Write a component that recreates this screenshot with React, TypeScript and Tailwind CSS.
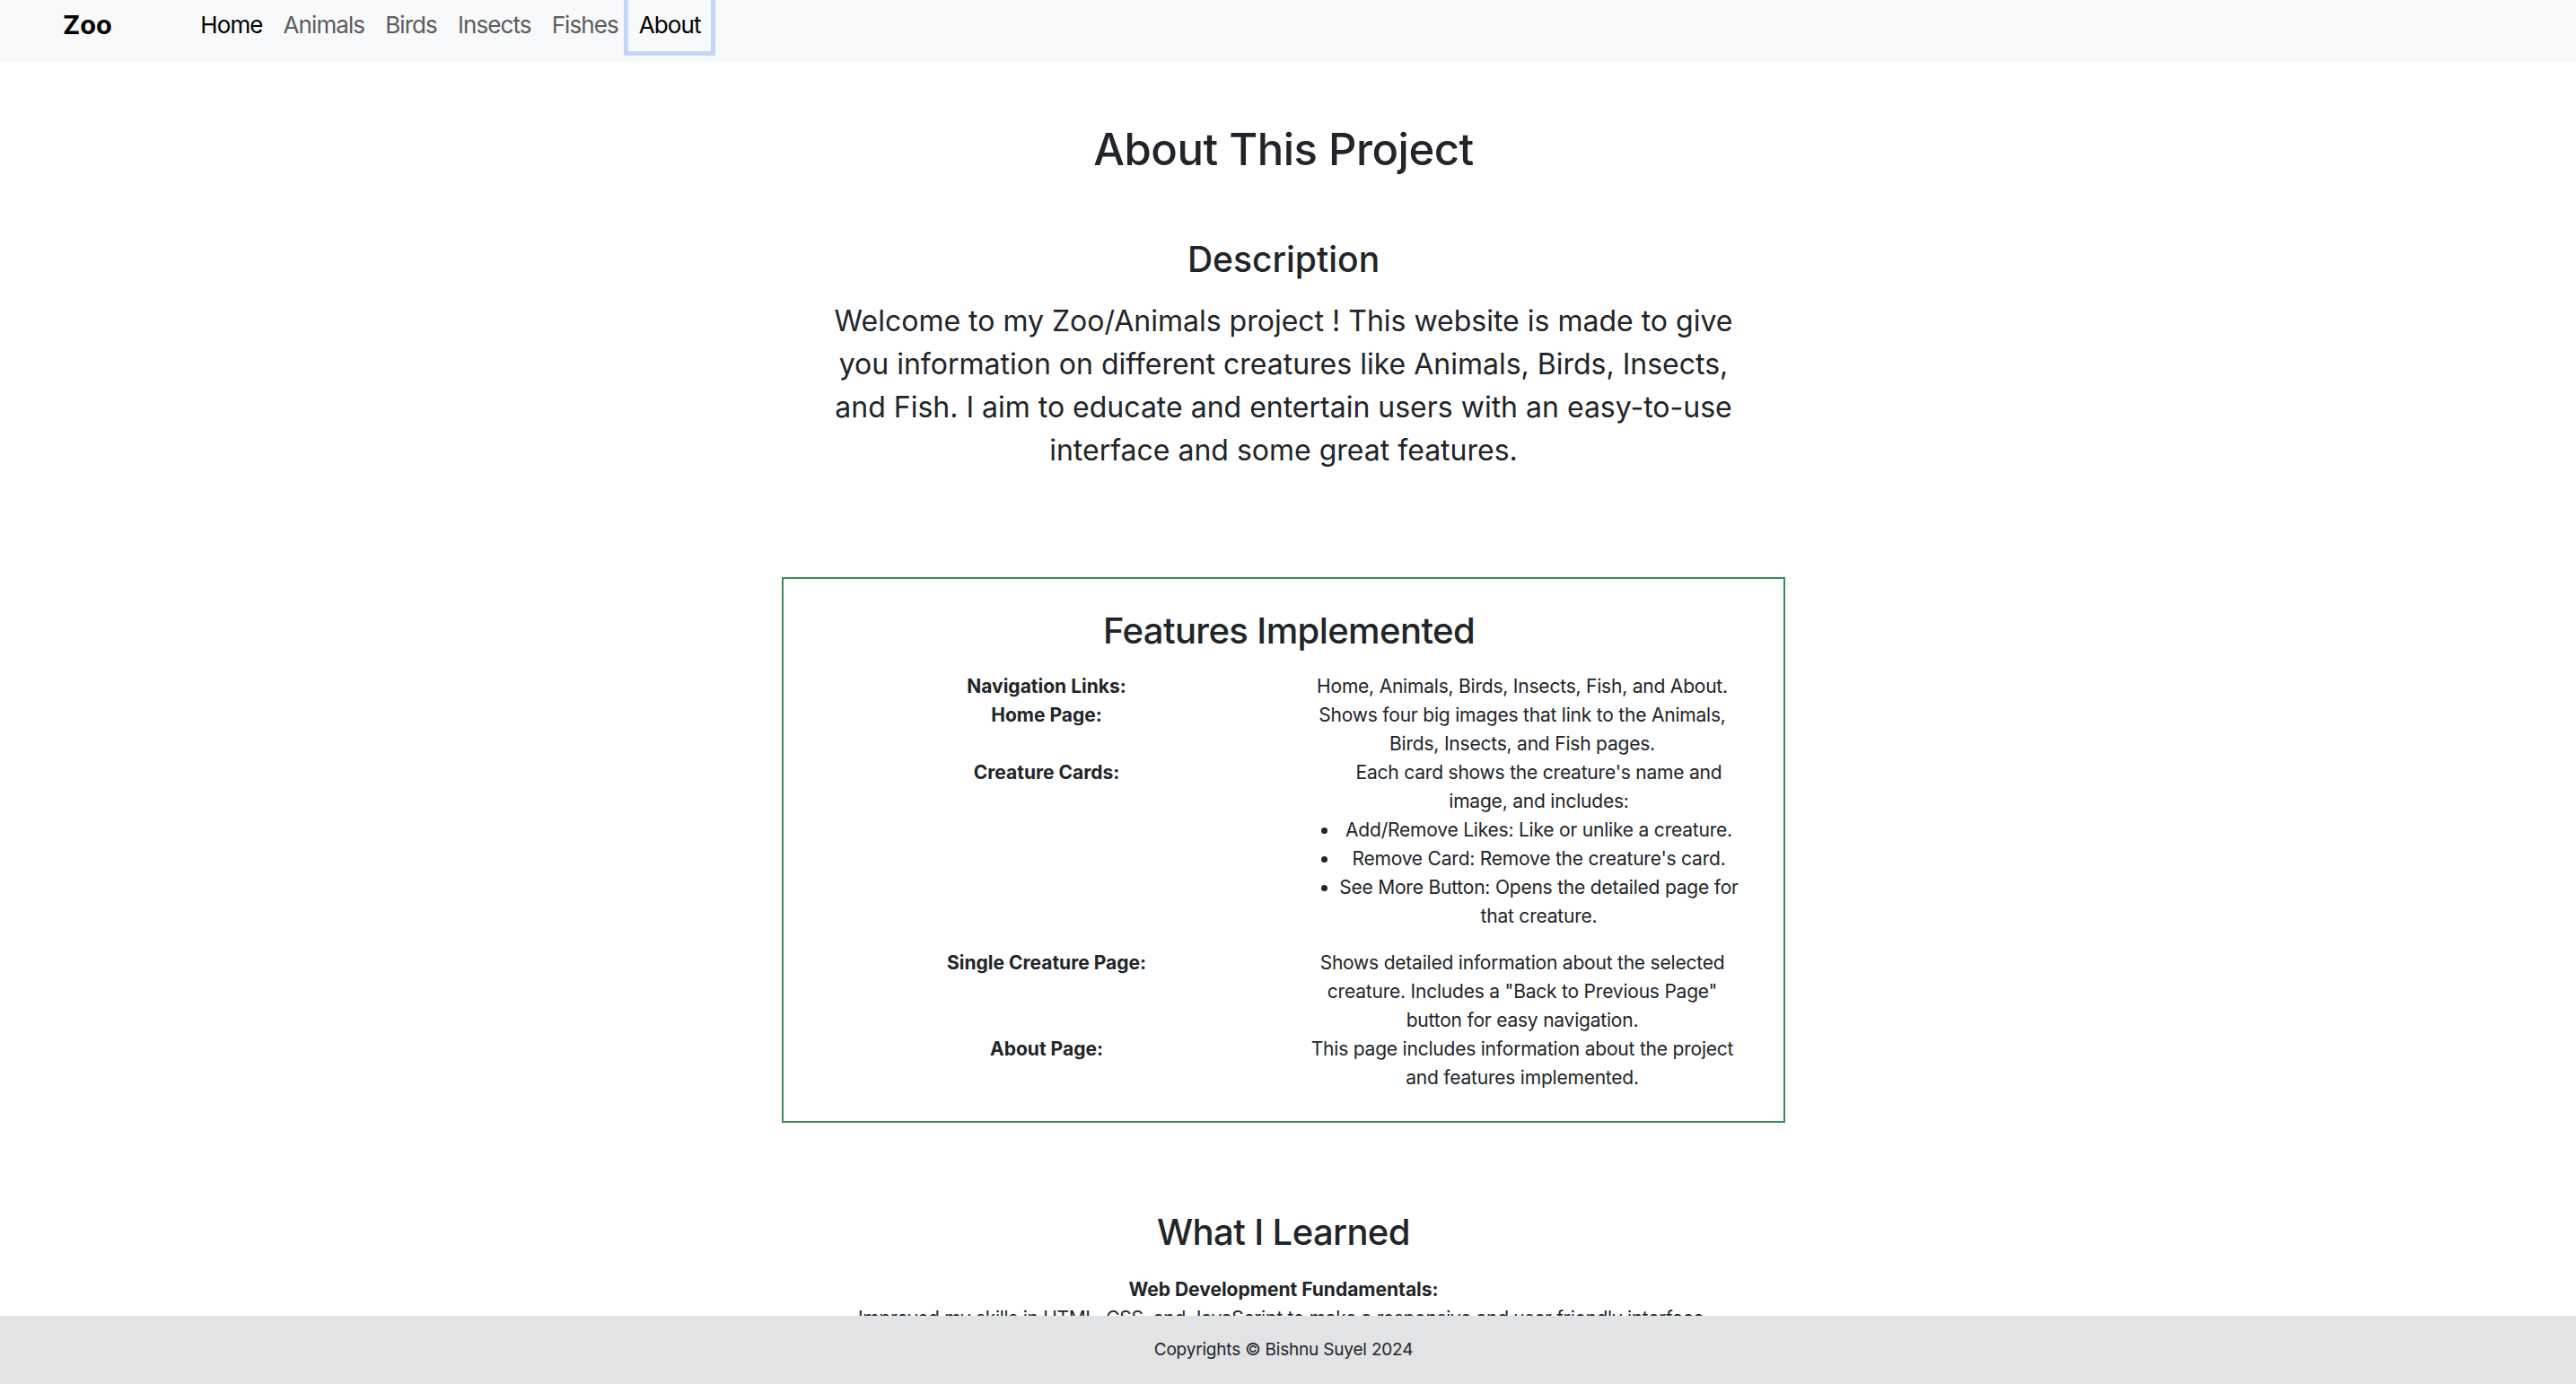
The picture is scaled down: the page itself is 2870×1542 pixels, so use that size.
import React from "react";

const navLinks = [
  { label: "Home", active: true },
  { label: "Animals" },
  { label: "Birds" },
  { label: "Insects" },
  { label: "Fishes" },
  { label: "About", focused: true },
];

type Feature = {
  label: string;
  lines?: string[];
  intro?: string[];
  bullets?: string[][];
};

const features: Feature[] = [
  {
    label: "Navigation Links:",
    lines: ["Home, Animals, Birds, Insects, Fish, and About."],
  },
  {
    label: "Home Page:",
    lines: [
      "Shows four big images that link to the Animals,",
      "Birds, Insects, and Fish pages.",
    ],
  },
  {
    label: "Creature Cards:",
    intro: ["Each card shows the creature's name and", "image, and includes:"],
    bullets: [
      ["Add/Remove Likes: Like or unlike a creature."],
      ["Remove Card: Remove the creature's card."],
      ["See More Button: Opens the detailed page for", "that creature."],
    ],
  },
  {
    label: "Single Creature Page:",
    lines: [
      "Shows detailed information about the selected",
      'creature. Includes a "Back to Previous Page"',
      "button for easy navigation.",
    ],
  },
  {
    label: "About Page:",
    lines: [
      "This page includes information about the project",
      "and features implemented.",
    ],
  },
];

function Lines({ lines }: { lines: string[] }) {
  return (
    <>
      {lines.map((l, i) => (
        <div key={i} className="whitespace-nowrap">
          {l}
        </div>
      ))}
    </>
  );
}

export default function App() {
  return (
    <div className="flex flex-col h-screen overflow-hidden bg-white text-[#212529] font-['Inter',sans-serif]">
      {/* Navbar */}
      <nav className="h-[69px] shrink-0 bg-[#f8f9fa] flex items-start">
        <div className="ml-[70px] pt-[6px] text-[29px] leading-[44px] font-bold text-black">
          Zoo
        </div>
        <ul className="flex ml-[87px]">
          {navLinks.map((link) => (
            <li key={link.label}>
              <a
                href="#"
                className={`block h-[57px] px-[11.5px] pt-[6px] text-[26px] leading-[44px] tracking-[-0.035em] ${
                  link.active || link.focused ? "text-black" : "text-[#5b5c5d]"
                } ${link.focused ? "shadow-[0_0_0_5px_#c4d6f8]" : ""}`}
              >
                {link.label}
              </a>
            </li>
          ))}
        </ul>
      </nav>

      {/* Content */}
      <main className="flex-1 min-h-0 overflow-hidden pr-[10px]">
        <div className="flex flex-col items-center text-center">
          <h1 className="mt-[68px] text-[49px] leading-[60px] font-medium tracking-[-0.01em]">
            About This Project
          </h1>

          <h2 className="mt-[70px] text-[39px] leading-[44px] font-medium">
            Description
          </h2>
          <p className="mt-[23px] text-[32px] leading-[48px]">
            Welcome to my Zoo/Animals project ! This website is made to give
            <br />
            you information on different creatures like Animals, Birds, Insects,
            <br />
            and Fish. I aim to educate and entertain users with an easy-to-use
            <br />
            interface and some great features.
          </p>

          {/* Features box */}
          <section className="mt-[117px] w-[1118px] border-2 border-[#3d8a5b] pt-[33px] pb-[32px] pl-[12px]">
            <h2 className="text-[40px] leading-[50px] font-medium tracking-[-0.015em]">
              Features Implemented
            </h2>
            <div className="mt-[21px] grid grid-cols-[562px_482px] gap-x-[8px] text-[21px] leading-[32px]">
              {features.map((f) => (
                <React.Fragment key={f.label}>
                  <div className="font-bold whitespace-nowrap">{f.label}</div>
                  <div className="tracking-[-0.01em]">
                    {f.lines && <Lines lines={f.lines} />}
                    {f.intro && (
                      <div className="pl-[37px]">
                        <Lines lines={f.intro} />
                      </div>
                    )}
                    {f.bullets && (
                      <ul className="list-disc pl-[37px] mb-[20px]">
                        {f.bullets.map((b, i) => (
                          <li key={i}>
                            <Lines lines={b} />
                          </li>
                        ))}
                      </ul>
                    )}
                  </div>
                </React.Fragment>
              ))}
            </div>
          </section>

          <h2 className="mt-[97px] text-[40px] leading-[50px] font-medium tracking-[-0.015em]">
            What I Learned
          </h2>
          <div className="mt-[23px] text-[21px] leading-[32px] font-bold">
            Web Development Fundamentals:
          </div>
          <div className="text-[21px] leading-[32px] tracking-[-0.015em]">
            Improved my skills in HTML, CSS, and JavaScript to make a responsive
            and user friendly interface.
          </div>
        </div>
      </main>

      {/* Footer */}
      <footer className="h-[76px] shrink-0 bg-[#e2e3e5] flex items-center justify-center pr-[10px]">
        <span className="text-[19px] tracking-[-0.01em]">
          Copyrights © Bishnu Suyel 2024
        </span>
      </footer>
    </div>
  );
}
